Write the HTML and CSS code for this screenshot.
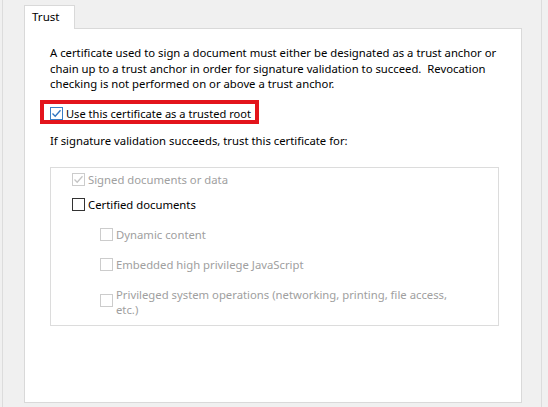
FILE: index.html
```html
<!DOCTYPE html>
<html>
<head>
<meta charset="utf-8">
<link rel="stylesheet" href="styles.css">
</head>
<body>
<div class="frame">
  <div class="tabs">
    <div class="tab">Trust</div>
  </div>
  <div class="panel">
    <p class="desc">A certificate used to sign a document must either be designated as a trust anchor or chain up to a trust anchor in order for signature validation to succeed.&nbsp; Revocation checking is not performed on or above a trust anchor.</p>
    <div class="highlight">
      <label class="check">
        <span class="box checked">
          <svg width="11" height="11" viewBox="0 0 11 11"><path d="M1.5 5.5 L4.2 8.3 L9.5 2.2" fill="none" stroke="#2f74c0" stroke-width="1.3"/></svg>
        </span>
        <span>Use this certificate as a trusted root</span>
      </label>
    </div>
    <p class="lead">If signature validation succeeds, trust this certificate for:</p>
    <div class="group">
      <label class="check disabled">
        <span class="box">
          <svg width="11" height="11" viewBox="0 0 11 11"><path d="M1.5 5.5 L4.2 8.3 L9.5 2.2" fill="none" stroke="#c4c4c4" stroke-width="1.3"/></svg>
        </span>
        <span>Signed documents or data</span>
      </label>
      <label class="check">
        <span class="box"></span>
        <span>Certified documents</span>
      </label>
      <div class="sub">
        <label class="check disabled">
          <span class="box"></span>
          <span>Dynamic content</span>
        </label>
        <label class="check disabled">
          <span class="box"></span>
          <span>Embedded high privilege JavaScript</span>
        </label>
        <label class="check disabled multi">
          <span class="box"></span>
          <span>Privileged system operations (networking, printing, file access, etc.)</span>
        </label>
      </div>
    </div>
  </div>
</div>
</body>
</html>
```

FILE: styles.css
```css
html, body {
  margin: 0;
  padding: 0;
}
body {
  width: 548px;
  height: 407px;
  background: #f0f0f0;
  font-family: "Segoe UI", "Noto Sans", sans-serif;
  font-size: 11.3px;
  color: #000;
  overflow: hidden;
}
.frame {
  margin-left: 2px;
  width: 540px;
  height: 407px;
  border-left: 1px solid #dcdcdc;
  border-right: 1px solid #dcdcdc;
  box-sizing: border-box;
  padding: 5px 0 0 21px;
}
.tabs {
  display: flex;
  height: 23px;
}
.tab {
  position: relative;
  z-index: 1;
  width: 51px;
  height: 24px;
  border: 1px solid #d9d9d9;
  border-bottom: none;
  background: #fff;
  padding: 3px 0 0 7px;
  box-sizing: border-box;
  line-height: 16px;
  font-size: 11.6px;
}
.panel {
  margin-top: 0;
  width: 498px;
  height: 375px;
  box-sizing: border-box;
  border: 1px solid #d9d9d9;
  background: #fff;
  padding: 16px 10px 0 25px;
}
.desc {
  margin: 0;
  line-height: 15.5px;
  width: 450px;
}
.highlight {
  margin: 8px 0 0 -10px;
  width: 219px;
  height: 24px;
  box-sizing: border-box;
  border: 4px solid #e3141c;
  padding: 3px 0 0 6px;
}
.check {
  display: flex;
  align-items: flex-start;
  gap: 3px;
  line-height: 16px;
  white-space: nowrap;
}
.box {
  flex: none;
  width: 13px;
  height: 13px;
  box-sizing: border-box;
  border: 1px solid #333;
  background: #fff;
  display: flex;
  align-items: center;
  justify-content: center;
  margin-top: 1px;
}
.box.checked {
  border-color: #3a7fc6;
}
.highlight .check {
  line-height: 14px;
  font-size: 11.1px;
}
.highlight .box {
  margin-top: 0;
}
.disabled {
  color: #a0a0a0;
}
.disabled .box {
  border-color: #cccccc;
}
.lead {
  margin: 9px 0 0;
  line-height: 16px;
}
.group {
  margin-top: 18px;
  width: 449px;
  height: 159px;
  box-sizing: border-box;
  border: 1px solid #dcdcdc;
  padding: 4px 0 0 21px;
  display: flex;
  flex-direction: column;
  gap: 9px;
}
.sub {
  padding-left: 28px;
  margin-top: 5px;
  display: flex;
  flex-direction: column;
  gap: 14px;
}
.multi {
  width: 355px;
  line-height: 15px;
  white-space: normal;
}
.multi .box {
  margin-top: 7px;
}
```
